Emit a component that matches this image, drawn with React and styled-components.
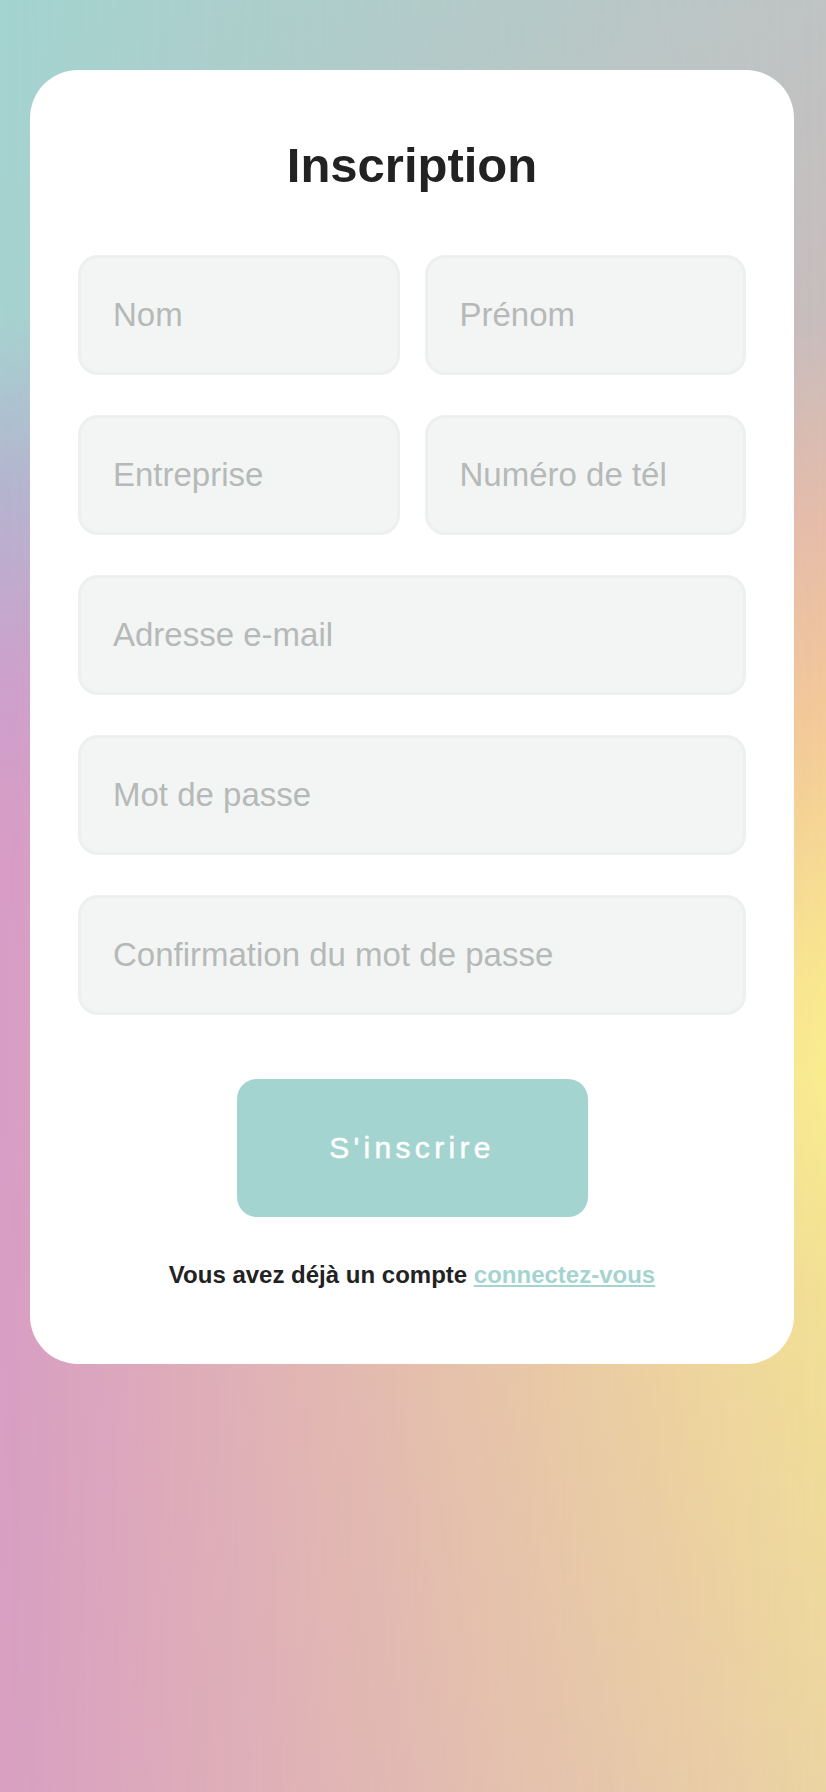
import React from "react";
import styled, { createGlobalStyle } from "styled-components";

const GlobalStyle = createGlobalStyle`
  * {
    box-sizing: border-box;
  }
  html, body {
    margin: 0;
    padding: 0;
  }
  body {
    font-family: "Liberation Sans", Arial, Helvetica, sans-serif;
  }
`;

const fields = [
  { name: "nom", label: "Nom" },
  { name: "prenom", label: "Prénom" },
  { name: "entreprise", label: "Entreprise" },
  { name: "tel", label: "Numéro de tél" },
  { name: "email", label: "Adresse e-mail", wide: true, type: "email" },
  { name: "password", label: "Mot de passe", wide: true, type: "password" },
  {
    name: "confirm",
    label: "Confirmation du mot de passe",
    wide: true,
    type: "password",
  },
];

function App() {
  return (
    <>
      <GlobalStyle />
      <Page>
        <Card>
          <Title>Inscription</Title>
          <Form onSubmit={(e) => e.preventDefault()}>
            <Fields>
              {fields.map((field) => (
                <Input
                  key={field.name}
                  name={field.name}
                  type={field.type || "text"}
                  placeholder={field.label}
                  $wide={field.wide}
                />
              ))}
            </Fields>
            <Submit type='submit'>S'inscrire</Submit>
          </Form>
          <Footer>
            Vous avez déjà un compte <LoginLink href='#'>connectez-vous</LoginLink>
          </Footer>
        </Card>
      </Page>
    </>
  );
}

export default App;

const Page = styled.div`
  position: relative;
  min-height: 1792px;
  padding: 70px 32px 0 30px;
  background: linear-gradient(
    to bottom,
    #a4d4d0 0%,
    #a6d2d0 18%,
    #b4b5d0 27%,
    #cda0cc 38%,
    #d89cc6 48%,
    #d9a0c2 100%
  );

  &::before {
    content: "";
    position: absolute;
    inset: 0;
    background: linear-gradient(
      to bottom,
      #bfc3c3 0%,
      #c8bcbc 18%,
      #e6bca9 29%,
      #f3c998 40%,
      #f9e88e 55%,
      #f9ec8f 60%,
      #f2e094 72%,
      #ebd4a2 100%
    );
    -webkit-mask-image: linear-gradient(to right, transparent, #000);
    mask-image: linear-gradient(to right, transparent, #000);
  }
`;

const Card = styled.div`
  position: relative;
  z-index: 1;
  background: #ffffff;
  border-radius: 48px;
  padding: 66px 48px 75px;
  display: flex;
  flex-direction: column;
  align-items: center;
`;

const Title = styled.h1`
  margin: 0 0 61px;
  font-size: 49px;
  line-height: 58px;
  font-weight: 700;
  color: #222222;
`;

const Form = styled.form`
  width: 100%;
  display: flex;
  flex-direction: column;
  align-items: center;
`;

const Fields = styled.div`
  width: 100%;
  display: grid;
  grid-template-columns: 1fr 1fr;
  column-gap: 25px;
  row-gap: 40px;
`;

const Input = styled.input`
  grid-column: ${({ $wide }) => ($wide ? "1 / -1" : "auto")};
  width: 100%;
  height: 120px;
  padding: 0 32px;
  border: 3px solid #eeefef;
  border-radius: 20px;
  background: #f3f5f4;
  font-family: "Liberation Sans", Arial, sans-serif;
  font-size: 33px;
  color: #333333;
  outline: none;

  &::placeholder {
    color: #b5b9b7;
  }
`;

const Submit = styled.button`
  margin-top: 64px;
  width: 351px;
  height: 138px;
  border: none;
  border-radius: 20px;
  background: #a4d4cf;
  color: #ffffff;
  font-family: "Liberation Sans", Arial, sans-serif;
  font-size: 30px;
  letter-spacing: 4.3px;
  -webkit-text-stroke: 0.5px #ffffff;
  cursor: pointer;
`;

const Footer = styled.p`
  margin: 44px 0 0;
  font-size: 24px;
  line-height: 28px;
  font-weight: 700;
  color: #222222;
`;

const LoginLink = styled.a`
  color: #a4d4cf;
  text-decoration: underline;
`;
